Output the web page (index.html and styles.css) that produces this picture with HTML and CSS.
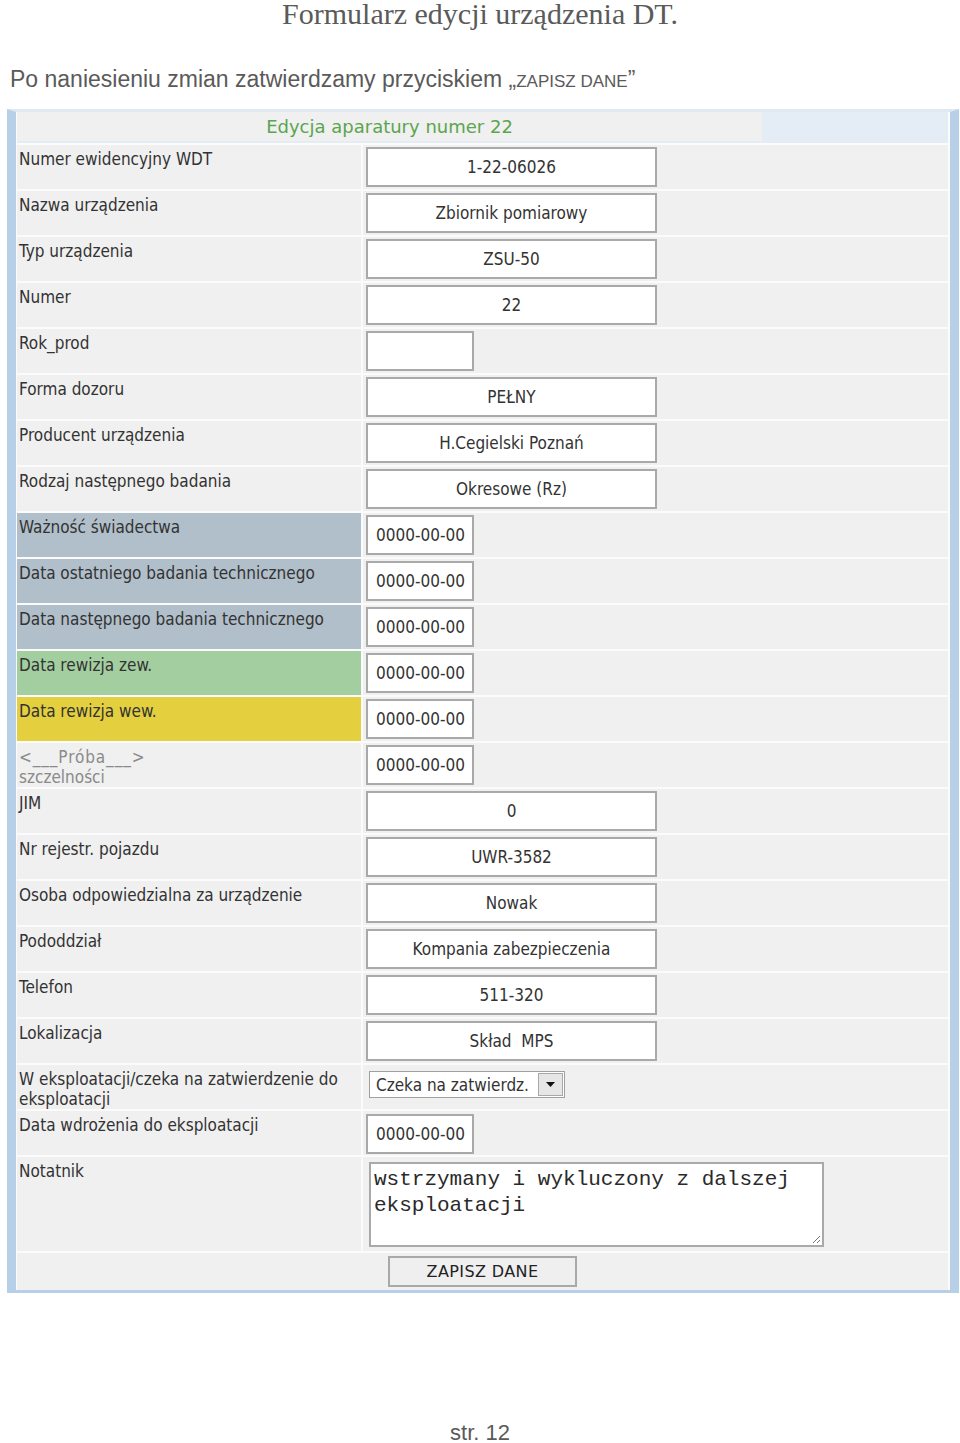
FILE: index.html
```html
<!DOCTYPE html>
<html lang="pl">
<head>
<meta charset="utf-8">
<title>Formularz edycji urządzenia DT.</title>
<link rel="stylesheet" href="styles.css">
</head>
<body>
<h1 class="title">Formularz edycji urządzenia DT.</h1>
<p class="intro">Po naniesieniu zmian zatwierdzamy przyciskiem „<span class="caps">ZAPISZ DANE</span>”</p>

<div class="frame">
  <div class="head-row"><div class="head-cell">Edycja aparatury numer 22</div></div>

  <div class="row"><div class="lbl">Numer ewidencyjny WDT</div><div class="val"><div class="field wide">1-22-06026</div></div></div>
  <div class="row"><div class="lbl">Nazwa urządzenia</div><div class="val"><div class="field wide">Zbiornik pomiarowy</div></div></div>
  <div class="row"><div class="lbl">Typ urządzenia</div><div class="val"><div class="field wide">ZSU-50</div></div></div>
  <div class="row"><div class="lbl">Numer</div><div class="val"><div class="field wide">22</div></div></div>
  <div class="row"><div class="lbl">Rok_prod</div><div class="val"><div class="field narrow"></div></div></div>
  <div class="row"><div class="lbl">Forma dozoru</div><div class="val"><div class="field wide">PEŁNY</div></div></div>
  <div class="row"><div class="lbl">Producent urządzenia</div><div class="val"><div class="field wide">H.Cegielski Poznań</div></div></div>
  <div class="row"><div class="lbl">Rodzaj następnego badania</div><div class="val"><div class="field wide">Okresowe (Rz)</div></div></div>
  <div class="row"><div class="lbl slate">Ważność świadectwa</div><div class="val"><div class="field narrow">0000-00-00</div></div></div>
  <div class="row"><div class="lbl slate">Data ostatniego badania technicznego</div><div class="val"><div class="field narrow">0000-00-00</div></div></div>
  <div class="row"><div class="lbl slate">Data następnego badania technicznego</div><div class="val"><div class="field narrow">0000-00-00</div></div></div>
  <div class="row"><div class="lbl green">Data rewizja zew.</div><div class="val"><div class="field narrow">0000-00-00</div></div></div>
  <div class="row"><div class="lbl yellow">Data rewizja wew.</div><div class="val"><div class="field narrow">0000-00-00</div></div></div>
  <div class="row"><div class="lbl muted"><span class="proba">&lt;___Próba___&gt;</span><br>szczelności</div><div class="val"><div class="field narrow">0000-00-00</div></div></div>
  <div class="row"><div class="lbl">JIM</div><div class="val"><div class="field wide">0</div></div></div>
  <div class="row"><div class="lbl">Nr rejestr. pojazdu</div><div class="val"><div class="field wide">UWR-3582</div></div></div>
  <div class="row"><div class="lbl">Osoba odpowiedzialna za urządzenie</div><div class="val"><div class="field wide">Nowak</div></div></div>
  <div class="row"><div class="lbl">Pododdział</div><div class="val"><div class="field wide">Kompania zabezpieczenia</div></div></div>
  <div class="row"><div class="lbl">Telefon</div><div class="val"><div class="field wide">511-320</div></div></div>
  <div class="row"><div class="lbl">Lokalizacja</div><div class="val"><div class="field wide">Skład&nbsp; MPS</div></div></div>
  <div class="row"><div class="lbl">W eksploatacji/czeka na zatwierdzenie do<br>eksploatacji</div><div class="val"><div class="select"><span class="select-text">Czeka na zatwierdz.</span><span class="select-btn"><svg width="9" height="5" viewBox="0 0 9 5"><path d="M0 0h9L4.5 5z" fill="#111"/></svg></span></div></div></div>
  <div class="row"><div class="lbl">Data wdrożenia do eksploatacji</div><div class="val"><div class="field narrow low">0000-00-00</div></div></div>
  <div class="row tall"><div class="lbl">Notatnik</div><div class="val"><div class="note">wstrzymany i wykluczony z dalszej<br>eksploatacji<svg class="grip" width="11" height="11" viewBox="0 0 11 11"><path d="M10 3L3 10M10 7L7 10" stroke="#777" stroke-width="1"/></svg></div></div></div>
  <div class="btn-row"><div class="btn">ZAPISZ DANE</div></div>
</div>

<p class="page">str. 12</p>
</body>
</html>
```

FILE: styles.css
```css
html, body {
  margin: 0;
  padding: 0;
  background: #fff;
}
body {
  width: 960px;
}
.title {
  margin: 0;
  text-align: center;
  font-family: "Liberation Serif", serif;
  font-weight: normal;
  font-size: 30px;
  line-height: 27px;
  color: #5a5a5a;
}
.intro {
  margin: 39px 0 0 10px;
  font-family: "Liberation Sans", sans-serif;
  font-size: 23px;
  line-height: 26px;
  color: #5a5a5a;
}
.caps {
  font-size: 17px;
  line-height: 1;
}
.frame {
  margin: 17px 0 0 7px;
  width: 952px;
  box-sizing: border-box;
  border-left: 9px solid #b8cfe8;
  border-right: 9px solid #b8cfe8;
  border-bottom: 3px solid #b8cfe8;
  border-top: 3px solid #e0e9f3;
  background: #fbfbfb;
  padding: 0 2px 0 1px;
  display: flex;
  flex-direction: column;
  gap: 2px;
  font-family: "DejaVu Sans Condensed", "DejaVu Sans", sans-serif;
  font-stretch: condensed;
  font-size: 17px;
  color: #333;
}
.head-row {
  height: 31px;
  box-sizing: border-box;
  padding-bottom: 2px;
  background: #e4ecf5;
}
.head-cell {
  width: 745px;
  height: 29px;
  line-height: 29px;
  background: #f0f0f0;
  color: #5aa54f;
  text-align: center;
  font-family: "DejaVu Sans", sans-serif;
  font-stretch: normal;
  font-size: 18px;
}
.row {
  display: grid;
  grid-template-columns: 344px 585px;
  column-gap: 2px;
  height: 44px;
}
.row.tall {
  height: 94px;
}
.lbl {
  background: #f0f0f0;
  padding: 4px 0 0 2px;
  line-height: 20px;
}
.lbl.slate { background: #b1bfca; }
.lbl.green { background: #a3cfa0; }
.lbl.yellow { background: #e4cf3e; }
.lbl.muted { color: #8a8a8a; }
.proba {
  letter-spacing: 0.9px;
}
.val {
  background: #f0f0f0;
  padding: 2px 0 0 3px;
}
.field {
  box-sizing: border-box;
  height: 40px;
  border: 2px solid #a9a9a9;
  background: #fff;
  line-height: 36px;
  white-space: pre;
}
.field.wide {
  width: 291px;
  text-align: center;
}
.field.narrow {
  width: 108px;
  padding-left: 8px;
}
.field.low {
  margin-top: 1px;
}
.select {
  margin: 4px 0 0 3px;
  width: 196px;
  height: 27px;
  box-sizing: border-box;
  border: 1px solid #a0a0a0;
  background: #fff;
  display: flex;
  align-items: center;
  justify-content: space-between;
  padding: 0 1px 0 6px;
  font-size: 17px;
}
.select-btn {
  width: 25px;
  height: 23px;
  box-sizing: border-box;
  border: 1px solid #a8a8a8;
  background: #e6e6e6;
  display: flex;
  align-items: center;
  justify-content: center;
}
.note {
  position: relative;
  margin: 3px 0 0 3px;
  width: 455px;
  height: 85px;
  box-sizing: border-box;
  border: 2px solid #a9a9a9;
  background: #fff;
  padding: 3px 0 0 3px;
  font-family: "Liberation Mono", monospace;
  font-stretch: normal;
  font-size: 21px;
  line-height: 26px;
  color: #2a2a2a;
}
.grip {
  position: absolute;
  right: 1px;
  bottom: 1px;
}
.btn-row {
  height: 37px;
  background: #f0f0f0;
  display: flex;
  justify-content: center;
  padding-top: 3px;
  box-sizing: border-box;
}
.btn {
  width: 189px;
  height: 31px;
  box-sizing: border-box;
  border: 2px solid #a9a9a9;
  background: #efefef;
  text-align: center;
  line-height: 27px;
  font-family: "DejaVu Sans", sans-serif;
  font-stretch: normal;
  font-size: 16px;
  letter-spacing: 0.4px;
  color: #222;
}
.page {
  margin: 128px 0 0 0;
  text-align: center;
  font-family: "Liberation Sans", sans-serif;
  font-size: 22px;
  line-height: 24px;
  color: #5a5a5a;
}
```
